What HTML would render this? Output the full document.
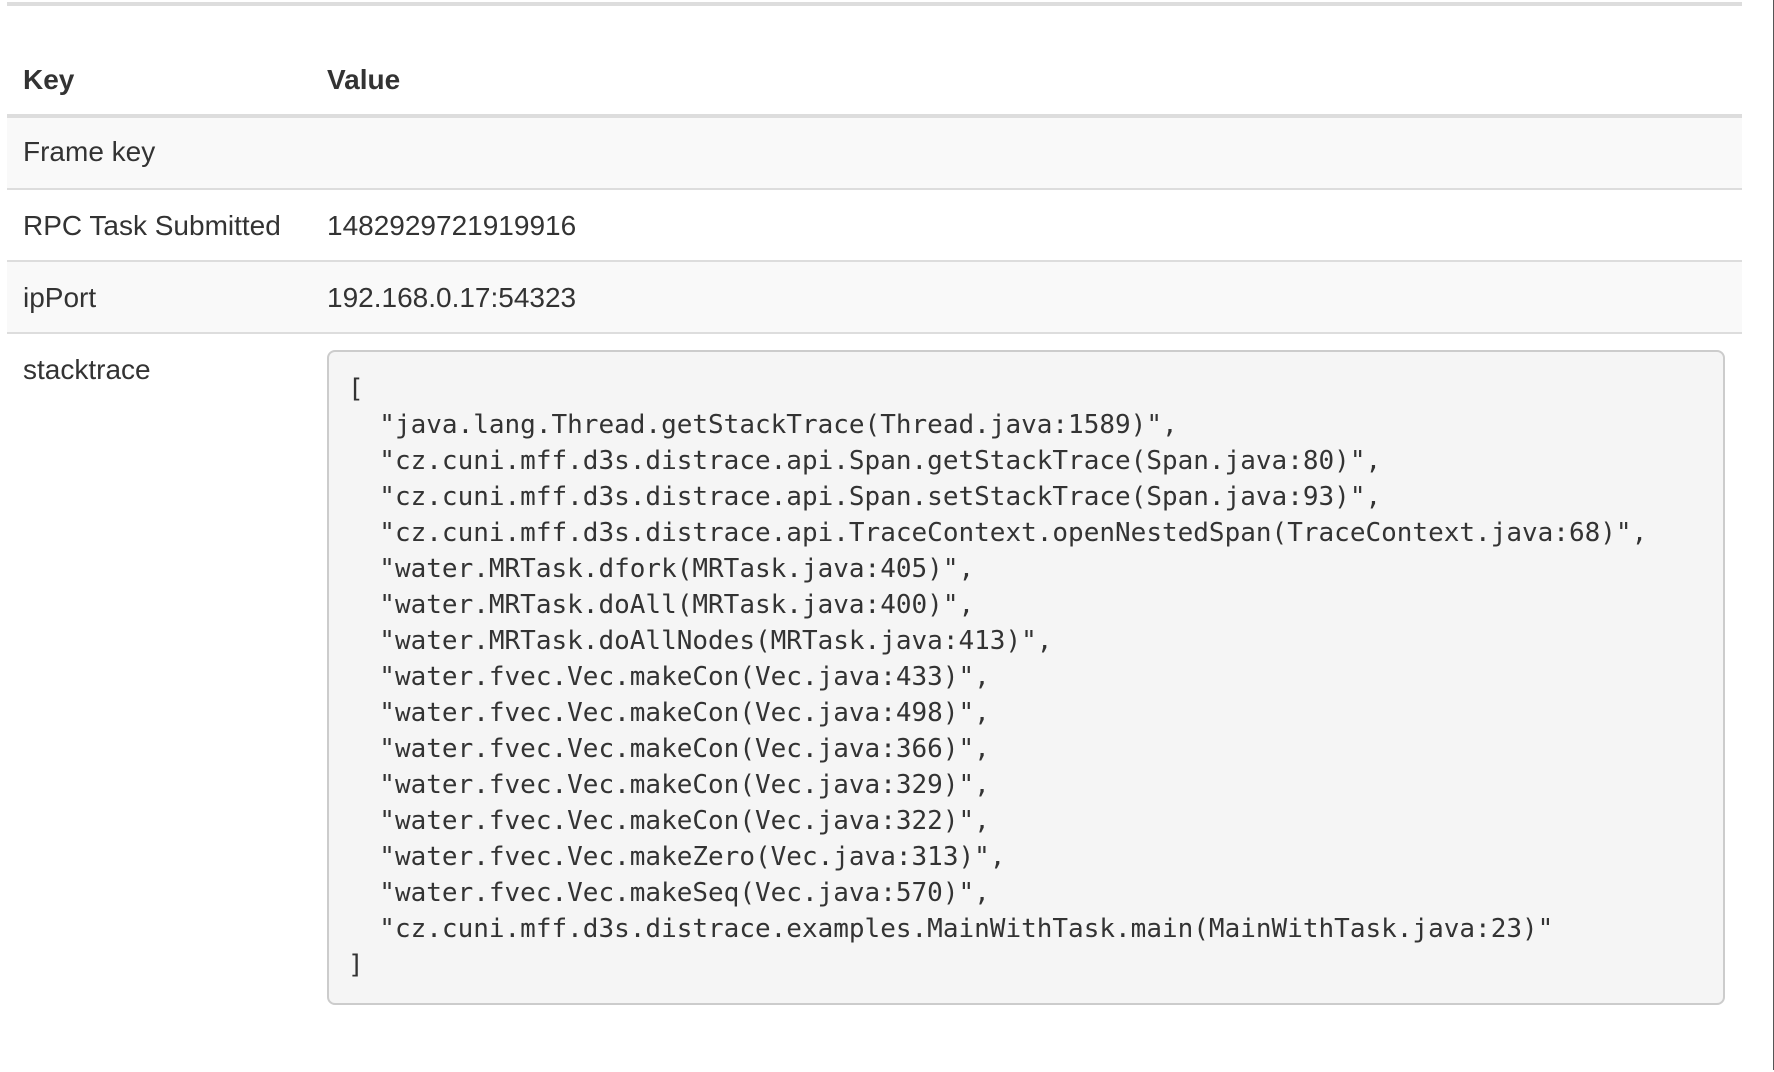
<!DOCTYPE html>
<html><head><meta charset="utf-8"><style>
body{margin:0;width:1774px;height:1070px;background:#fff;overflow:hidden;font-family:"Liberation Sans",Helvetica,Arial,sans-serif;color:#333;position:relative}
.topline{position:absolute;left:7px;top:2px;width:1735px;height:4px;background:#ddd}
.row{position:absolute;left:7px;width:1735px;font-size:28px;line-height:40px}
.row .k{position:absolute;left:16px}
.row .v{position:absolute;left:320px}
.hdr{top:42px;height:72px;border-bottom:4px solid #ddd;font-weight:bold}
.hdr .k,.hdr .v{top:18px}
.r{height:70px;border-top:2px solid #ddd}
.r .k,.r .v{top:16px}
.s{background:#f9f9f9}
pre{position:absolute;left:327px;top:350px;width:1356px;height:613px;margin:0;padding:19px;border:2px solid #ccc;border-radius:8px;background:#f5f5f5;font-family:"DejaVu Sans Mono","Liberation Mono",monospace;font-size:26px;line-height:36px;color:#333;box-sizing:content-box}
.edge{position:absolute;right:0;top:0;width:1px;height:1070px;background:#555}
</style></head><body>
<div class="topline"></div>
<div class="row hdr"><span class="k">Key</span><span class="v">Value</span></div>
<div class="row s" style="top:118px;height:70px"><span class="k" style="top:14px">Frame key</span></div>
<div class="row r" style="top:188px"><span class="k">RPC Task Submitted</span><span class="v">1482929721919916</span></div>
<div class="row r s" style="top:260px"><span class="k">ipPort</span><span class="v">192.168.0.17:54323</span></div>
<div class="row r" style="top:332px;height:738px"><span class="k">stacktrace</span></div>
<pre>[
  "java.lang.Thread.getStackTrace(Thread.java:1589)",
  "cz.cuni.mff.d3s.distrace.api.Span.getStackTrace(Span.java:80)",
  "cz.cuni.mff.d3s.distrace.api.Span.setStackTrace(Span.java:93)",
  "cz.cuni.mff.d3s.distrace.api.TraceContext.openNestedSpan(TraceContext.java:68)",
  "water.MRTask.dfork(MRTask.java:405)",
  "water.MRTask.doAll(MRTask.java:400)",
  "water.MRTask.doAllNodes(MRTask.java:413)",
  "water.fvec.Vec.makeCon(Vec.java:433)",
  "water.fvec.Vec.makeCon(Vec.java:498)",
  "water.fvec.Vec.makeCon(Vec.java:366)",
  "water.fvec.Vec.makeCon(Vec.java:329)",
  "water.fvec.Vec.makeCon(Vec.java:322)",
  "water.fvec.Vec.makeZero(Vec.java:313)",
  "water.fvec.Vec.makeSeq(Vec.java:570)",
  "cz.cuni.mff.d3s.distrace.examples.MainWithTask.main(MainWithTask.java:23)"
]</pre>
<div class="edge"></div>
</body></html>
